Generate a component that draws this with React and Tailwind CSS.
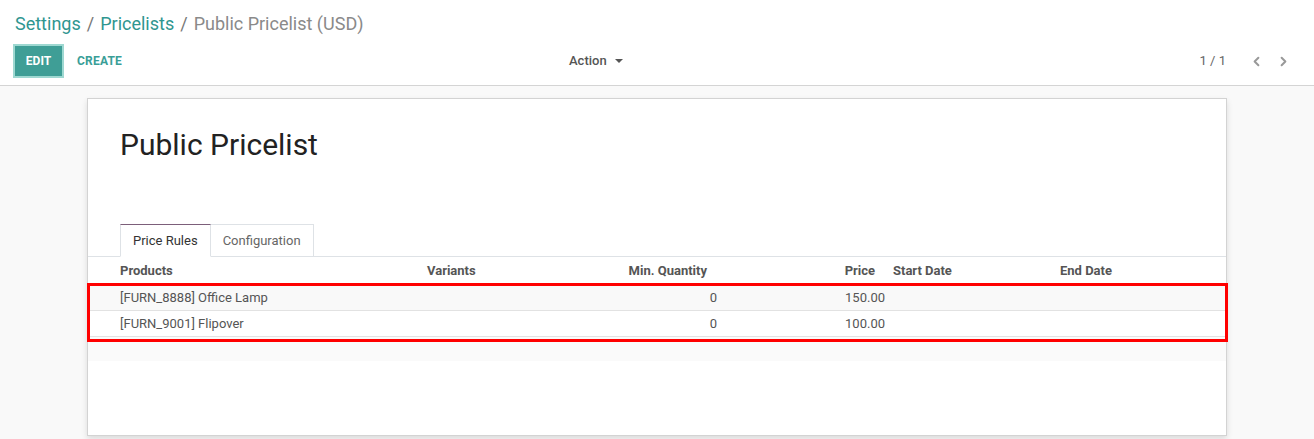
import React from 'react';
import { ChevronLeft, ChevronRight } from 'lucide-react';

const columns = [
  { key: 'product', label: 'Products', w: 'w-[332px]', head: 'pl-[32px] text-left', cell: 'pl-[32px] text-left' },
  { key: 'variant', label: 'Variants', w: 'w-[200px]', head: 'pl-[7px] text-left', cell: 'pl-[7px] text-left' },
  { key: 'qty', label: 'Min. Quantity', w: 'w-[105px]', head: 'pr-[18px] text-right', cell: 'pr-[8px] text-right' },
  { key: 'price', label: 'Price', w: 'w-[160px]', head: 'pr-[10px] text-right', cell: 'pr-0 text-right' },
  { key: 'start', label: 'Start Date', w: 'w-[167px]', head: 'pl-[8px] text-left', cell: 'pl-[8px] text-left' },
  { key: 'end', label: 'End Date', w: 'w-[174px]', head: 'pl-[8px] text-left', cell: 'pl-[8px] text-left' },
];

const rules = [
  { product: '[FURN_8888] Office Lamp', variant: '', qty: '0', price: '150.00', start: '', end: '' },
  { product: '[FURN_9001] Flipover', variant: '', qty: '0', price: '100.00', start: '', end: '' },
];

const ControlPanel = () => (
  <div className="bg-white border-b border-[#d4d4d4] h-[86px] px-[15px]">
    <div className="pt-[10px] text-[18px] leading-[27px] text-[#888]">
      <span className="text-[#2f9690]">Settings</span>
      <span className="mx-[6px] text-[#777]">/</span>
      <span className="text-[#2f9690]">Pricelists</span>
      <span className="mx-[6px] text-[#777]">/</span>
      <span className="text-[#8a8a8a]">Public Pricelist (USD)</span>
    </div>
    <div className="flex items-center mt-[9px] h-[30px]">
      <div className="flex items-center w-[554px]">
        <button className="ml-0 h-[30px] w-[47px] bg-[#3f9e96] text-white text-[12px] font-bold ring-2 ring-[#9ed8d1]">
          EDIT
        </button>
        <span className="ml-[15px] text-[12px] font-bold tracking-[0.2px] text-[#3a9e97]">CREATE</span>
      </div>
      <div className="flex items-center text-[13px] font-medium text-[#555]">
        Action
        <span className="ml-[8px] w-0 h-0 border-l-[4px] border-r-[4px] border-t-[4px] border-l-transparent border-r-transparent border-t-[#555]" />
      </div>
      <div className="ml-auto flex items-center text-[13px] text-[#666]">
        <span>1 / 1</span>
        <ChevronLeft className="ml-[23px] text-[#999]" size={15} strokeWidth={3.2} />
        <ChevronRight className="ml-[12px] mr-[8px] text-[#999]" size={15} strokeWidth={3.2} />
      </div>
    </div>
  </div>
);

const Tabs = () => (
  <div className="flex border-b border-[#dee2e6] pl-[32px] h-[33px] mt-[61px]">
    <div className="h-[33px] px-[12px] flex items-center bg-white border border-[#dee2e6] border-t-[#7c5f7a] border-b-white text-[13px] text-[#333] mb-[-1px]">
      Price Rules
    </div>
    <div className="h-[32px] px-[12px] flex items-center border border-[#dee2e6] border-l-0 border-b-0 text-[13px] text-[#666]">
      Configuration
    </div>
  </div>
);

const RulesTable = () => (
  <div>
    <div className="flex h-[28px] items-center text-[13px] font-bold text-[#555]">
      {columns.map((c) => (
        <div key={c.key} className={`${c.w} ${c.head} shrink-0`}>{c.label}</div>
      ))}
    </div>
    <div className="relative">
      {rules.map((r, i) => (
        <div
          key={i}
          className={`flex h-[26px] items-center text-[13px] text-[#555] border-b border-[#e2e2e2] ${i % 2 === 0 ? 'bg-[#f9f9f9]' : 'bg-white'}`}
        >
          {columns.map((c) => (
            <div key={c.key} className={`${c.w} ${c.cell} shrink-0`}>{r[c.key]}</div>
          ))}
        </div>
      ))}
      <div className="h-[24px] bg-[#fafafa]" />
      <div className="absolute top-[-2px] left-[-1px] w-[1141px] h-[59px] border-[3px] border-[#ff0000] pointer-events-none" />
    </div>
  </div>
);

export default function App() {
  return (
    <div className="min-h-[439px] bg-[#f9f9f9] font-['Roboto',sans-serif] overflow-hidden">
      <ControlPanel />
      <div className="w-[1140px] mx-auto mt-[12px] bg-white border border-[#d3d3d3] shadow-[0_3px_6px_rgba(0,0,0,0.12)] pt-[28px] pb-[74px]">
        <h1 className="pl-[32px] text-[30px] leading-[36px] text-[#222]">Public Pricelist</h1>
        <Tabs />
        <RulesTable />
      </div>
    </div>
  );
}
